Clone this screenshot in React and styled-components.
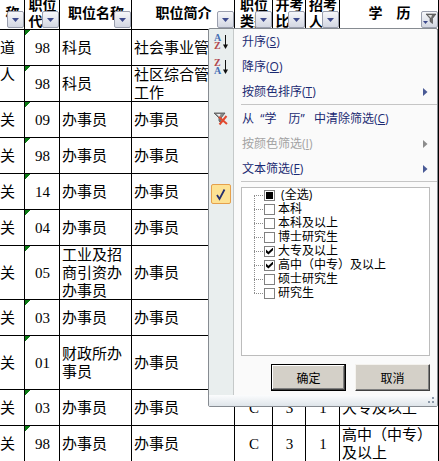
import React, { useEffect, useRef, useState } from 'react';
import styled, { createGlobalStyle } from 'styled-components';

const GlobalStyle = createGlobalStyle`
  * {
    box-sizing: border-box;
  }
  body {
    margin: 0;
    background: #fff;
    color: #000;
    font-family: "Liberation Serif", "Noto Sans CJK SC", serif;
  }
  button, input {
    font-family: inherit;
    margin: 0;
    padding: 0;
  }
`;

const Page = styled.main`
  position: relative;
  overflow: hidden;
`;

const Sheet = styled.table`
  width: 100%;
  table-layout: fixed;
  border-collapse: collapse;
`;

const Col = styled.col`
  width: ${(props) => props.$width || 'auto'};
`;

const HeadCell = styled.th`
  position: relative;
  padding: 0;
  box-shadow: inset -1px -1px 0 #000;
`;

const HeadText = styled.div`
  display: flex;
  align-items: center;
  justify-content: center;
  height: 30px;
  padding-bottom: 2px;
  overflow: hidden;
  font-size: 14px;
  font-weight: bold;
  line-height: 16px;
  white-space: pre;
`;

const FilterButton = styled.button`
  position: absolute;
  right: 1px;
  bottom: 2px;
  display: flex;
  align-items: center;
  justify-content: center;
  width: 17px;
  height: 17px;
  border: 1px solid #9a9fae;
  border-radius: 2px;
  background: linear-gradient(#f6f7fa, #d3d7e2);
`;

const Cell = styled.td`
  height: ${(props) => (props.$tall ? '54px' : '36px')};
  padding: ${(props) => (props.$flush ? '0' : '0 2px')};
  box-shadow: inset -1px -1px 0 #000;
  background: ${(props) => (props.$flag ? 'linear-gradient(135deg, #0b7a14 4px, transparent 4px)' : 'none')};
  font-size: 15px;
  line-height: 18px;
  text-align: ${(props) => (props.$center ? 'center' : 'left')};
  vertical-align: middle;
  white-space: pre-line;
`;

const Menu = styled.section`
  position: absolute;
  top: 28px;
  left: 208px;
  right: 1px;
  border: 1px solid #868b91;
  border-radius: 2px;
  background: linear-gradient(to right, #e9eeee 24px, #c5c9c9 24px, #c5c9c9 25px, #fafafa 25px);
  font-family: "Open Sans", "Noto Sans CJK SC", sans-serif;
  font-size: 12px;
`;

const MenuItem = styled.button`
  display: grid;
  grid-template-columns: 24px 1fr auto;
  align-items: center;
  width: 100%;
  height: 25px;
  padding-right: 9px;
  border: 0;
  background: none;
  color: ${(props) => (props.disabled ? '#a3a3a3' : '#1b2a72')};
  font-size: 12px;
  line-height: 16px;
  text-align: left;
`;

const ItemIcon = styled.span`
  display: flex;
  justify-content: center;
`;

const ItemText = styled.span`
  padding-left: 9px;
  white-space: pre;
`;

const Separator = styled.hr`
  height: 1px;
  margin: 0 0 1px 32px;
  border: 0;
  background: #c5c5c5;
`;

const Values = styled.div`
  display: grid;
  grid-template-columns: 24px 1fr;
  padding: 1px 7px 4px 0;
`;

const Toggle = styled.button`
  display: flex;
  align-items: center;
  justify-content: center;
  width: 20px;
  height: 20px;
  margin: 0 2px;
  border: 1px solid #e5a04c;
  border-radius: 2px;
  background: #fde293;
`;

const ValuesPane = styled.div`
  display: flex;
  flex-direction: column;
  gap: 8px;
  padding: 3px 0 0 8px;
`;

const ValueList = styled.ul`
  height: 169px;
  margin: 0;
  padding: 0 0 0 12px;
  border: 1px solid #bcbcbc;
  background: #fff;
  list-style: none;
`;

const ValueItem = styled.li`
  display: flex;
  align-items: center;
  height: 14px;
  background:
    linear-gradient(#fff, #fff) 0 ${(props) => (props.$edge === 'first' ? '0' : '-14px')} / 1px 7px no-repeat,
    linear-gradient(#fff, #fff) 0 ${(props) => (props.$edge === 'last' ? '8px' : '-14px')} / 1px 7px no-repeat,
    repeating-linear-gradient(#8c8c8c 0 1px, transparent 1px 2px) 0 0 / 1px 14px no-repeat,
    repeating-linear-gradient(to right, #8c8c8c 0 1px, transparent 1px 2px) 0 7px / 9px 1px no-repeat;
`;

const ValueLabel = styled.label`
  display: flex;
  align-items: center;
  gap: 3px;
  padding-left: 10px;
  font-size: 12px;
  line-height: 14px;
  white-space: nowrap;
`;

const Check = styled.input`
  appearance: none;
  display: grid;
  place-items: center;
  width: 11px;
  height: 11px;
  border: 1px solid #808080;
  background: #fff;

  &:checked::after {
    content: '';
    width: 7px;
    height: 7px;
    background: #000;
    clip-path: polygon(0 30%, 35% 62%, 100% 0, 100% 40%, 35% 100%, 0 70%);
  }
  &:indeterminate::after {
    content: '';
    width: 7px;
    height: 7px;
    background: #000;
  }
`;

const Actions = styled.div`
  display: flex;
  justify-content: flex-end;
  gap: 9px;
`;

const ActionButton = styled.button`
  width: 75px;
  height: 27px;
  border: 1px solid;
  border-color: ${(props) => (props.$primary ? '#000' : '#f4f2ee #404040 #404040 #f4f2ee')};
  background: #d4d0c8;
  box-shadow: ${(props) =>
    props.$primary
      ? 'inset -1px -1px 0 #404040, inset 1px 1px 0 #fff, inset -2px -2px 0 #808080'
      : 'inset -1px -1px 0 #808080'};
  color: #000;
  font-size: 12px;
`;

const Grip = styled.footer`
  display: flex;
  align-items: center;
  justify-content: flex-end;
  height: 11px;
  padding-right: 2px;
  background: linear-gradient(#fbfcfd, #dfe5ea);
`;

const columns = [
  { text: '称', width: '25px' },
  { text: '职位\n代码', width: '35px' },
  { text: '职位名称', width: '72px' },
  { text: '职位简介', width: '103px' },
  { text: '职位\n类别', width: '38px' },
  { text: '开考\n比例', width: '33px' },
  { text: '招考\n人数', width: '34px' },
  { text: '学　历', filtered: true },
];

const rows = [
  { unit: '道', code: '98', name: '科员', desc: '社会事业管理' },
  { unit: '人\n\u00a0', code: '98', name: '科员', desc: '社区综合管理工作' },
  { unit: '关', code: '09', name: '办事员', desc: '办事员' },
  { unit: '关', code: '98', name: '办事员', desc: '办事员' },
  { unit: '关', code: '14', name: '办事员', desc: '办事员' },
  { unit: '关', code: '04', name: '办事员', desc: '办事员' },
  { unit: '关', code: '05', name: '工业及招商引资办办事员', desc: '办事员', tall: true },
  { unit: '关', code: '03', name: '办事员', desc: '办事员' },
  { unit: '关', code: '01', name: '财政所办事员', desc: '办事员', tall: true },
  { unit: '关', code: '03', name: '办事员', desc: '办事员', type: 'C', ratio: '3', count: '1', degree: '大专及以上' },
  { unit: '关', code: '98', name: '办事员', desc: '办事员', type: 'C', ratio: '3', count: '1', degree: '高中（中专）及以上' },
];

const values = ['本科', '本科及以上', '博士研究生', '大专及以上', '高中（中专）及以上', '硕士研究生', '研究生'];

const ArrowDown = () => (
  <svg width="7" height="4" viewBox="0 0 7 4">
    <path d="M0 0h7L3.5 4z" fill="#3d4a8c" />
  </svg>
);

const FilterIcon = () => (
  <svg width="15" height="15" viewBox="0 0 15 15">
    <path d="M1 9h5L3.500 12z" fill="#3d4a8c" />
    <path d="M4 2h10L10.500 6.500v5L8 9.500v-3z" fill="#6c6c6c" stroke="#444" strokeWidth=".6" />
    <path d="M6 3h4l-1 3z" fill="#ddd" />
  </svg>
);

const SortIcon = ({ top, bottom }) => {
  const color = { A: '#4770b5', Z: '#b0474d' };
  return (
    <svg width="16" height="18" viewBox="0 0 16 18">
      <g fontFamily="Liberation Serif" fontWeight="bold" fontSize="10">
        <text x="1" y="8" fill={color[top]}>{top}</text>
        <text x="1" y="16" fill={color[bottom]}>{bottom}</text>
      </g>
      <path d="M12.500 2v13" stroke="#111" />
      <path d="M10 11.500h5L12.500 16z" fill="#111" />
    </svg>
  );
};

const ClearIcon = () => (
  <svg width="16" height="16" viewBox="0 0 16 16">
    <path d="M1 2h11L8 7v5L6 10V7z" fill="#8b8b8b" stroke="#4e4e4e" strokeWidth=".8" />
    <path d="M3.500 3h4L6.500 6z" fill="#eee" />
    <path d="M6 6l8 7M13.500 5L6.500 13.500" stroke="#e2492f" strokeWidth="2" fill="none" />
  </svg>
);

const SubmenuArrow = ({ disabled }) => (
  <svg width="5" height="8" viewBox="0 0 5 8">
    <path d="M0 0l4.500 4L0 8z" fill={disabled ? '#8c8c8c' : '#4a5a96'} />
  </svg>
);

const TickIcon = () => (
  <svg width="12" height="13" viewBox="0 0 12 13">
    <path d="M2 7l2.500 4L9.500 1.500" fill="none" stroke="#27306e" strokeWidth="1.800" />
  </svg>
);

const GripDots = () => (
  <svg width="7" height="7" viewBox="0 0 7 7" fill="#8b98a8">
    <path d="M4 0h2v2H4zM0 4h2v2H0zM4 4h2v2H4z" />
  </svg>
);

const Item = ({ icon, text, letter, submenu, disabled }) => (
  <MenuItem type="button" disabled={disabled}>
    <ItemIcon>{icon}</ItemIcon>
    <ItemText>
      {text}(<u>{letter}</u>)
    </ItemText>
    {submenu && <SubmenuArrow disabled={disabled} />}
  </MenuItem>
);

const FilterMenu = () => {
  const [selected, setSelected] = useState(['大专及以上', '高中（中专）及以上']);
  const allRef = useRef(null);
  const all = selected.length === values.length;

  useEffect(() => {
    allRef.current.indeterminate = selected.length > 0 && !all;
  }, [selected, all]);

  const toggle = (value) =>
    setSelected(selected.includes(value) ? selected.filter((v) => v !== value) : [...selected, value]);

  return (
    <Menu aria-label="筛选">
      <Item icon={<SortIcon top="A" bottom="Z" />} text="升序" letter="S" />
      <Item icon={<SortIcon top="Z" bottom="A" />} text="降序" letter="O" />
      <Item text="按颜色排序" letter="T" submenu />
      <Separator />
      <Item icon={<ClearIcon />} text="从  “学　历”   中清除筛选" letter="C" />
      <Item text="按颜色筛选" letter="I" submenu disabled />
      <Item text="文本筛选" letter="F" submenu />
      <Separator />
      <Values>
        <Toggle type="button" aria-label="按值筛选" aria-pressed="true">
          <TickIcon />
        </Toggle>
        <ValuesPane>
          <ValueList>
            <ValueItem $edge="first">
              <ValueLabel>
                <Check type="checkbox" ref={allRef} checked={all} onChange={() => setSelected(all ? [] : values)} />
                &nbsp;(全选)
              </ValueLabel>
            </ValueItem>
            {values.map((value, i) => (
              <ValueItem key={value} $edge={i === values.length - 1 ? 'last' : undefined}>
                <ValueLabel>
                  <Check type="checkbox" checked={selected.includes(value)} onChange={() => toggle(value)} />
                  {value}
                </ValueLabel>
              </ValueItem>
            ))}
          </ValueList>
          <Actions>
            <ActionButton type="button" $primary>确定</ActionButton>
            <ActionButton type="button">取消</ActionButton>
          </Actions>
        </ValuesPane>
      </Values>
      <Grip>
        <GripDots />
      </Grip>
    </Menu>
  );
};

export default function App() {
  return (
    <Page>
      <GlobalStyle />
      <Sheet>
        <colgroup>
          {columns.map((column) => (
            <Col key={column.text} $width={column.width} />
          ))}
        </colgroup>
        <thead>
          <tr>
            {columns.map((column) => (
              <HeadCell key={column.text} scope="col">
                <HeadText>{column.text}</HeadText>
                <FilterButton type="button" aria-label="筛选">
                  {column.filtered ? <FilterIcon /> : <ArrowDown />}
                </FilterButton>
              </HeadCell>
            ))}
          </tr>
        </thead>
        <tbody>
          {rows.map((row, i) => (
            <tr key={i}>
              <Cell $flush $tall={row.tall}>{row.unit}</Cell>
              <Cell $center $flag>{row.code}</Cell>
              <Cell>{row.name}</Cell>
              <Cell>{row.desc}</Cell>
              <Cell $center>{row.type}</Cell>
              <Cell $center>{row.ratio}</Cell>
              <Cell $center>{row.count}</Cell>
              <Cell>{row.degree}</Cell>
            </tr>
          ))}
        </tbody>
      </Sheet>
      <FilterMenu />
    </Page>
  );
}
